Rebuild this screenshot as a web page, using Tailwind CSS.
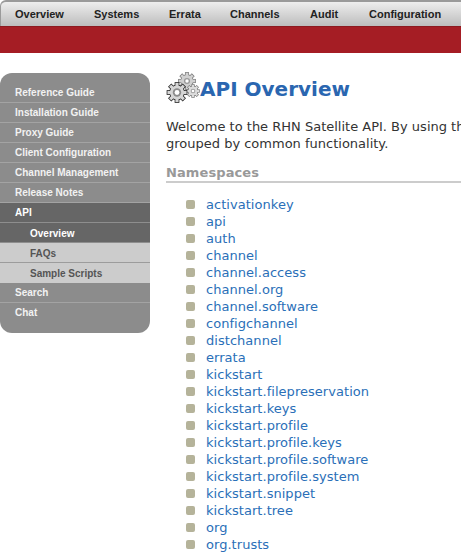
<!DOCTYPE html>
<html><head><meta charset="utf-8">
<script src="https://cdn.jsdelivr.net/npm/@tailwindcss/browser@4"></script>
</head>
<body class="bg-white overflow-hidden">
<div class="w-[461px] h-[558px] overflow-hidden flex flex-col">
  <nav class="h-[26px] shrink-0 flex items-center rounded-tl-[6px] border-t-2 border-l border-[#9a9a9a] border-b-0 bg-gradient-to-b from-[#eeeeee] to-[#bdbdbd] font-['Liberation_Sans',sans-serif] font-bold text-[11px] text-[#222] whitespace-nowrap">
    <a class="ml-[14px] w-[79px]">Overview</a>
    <a class="w-[75px]">Systems</a>
    <a class="w-[61px]">Errata</a>
    <a class="w-[80px]">Channels</a>
    <a class="w-[59px]">Audit</a>
    <a>Configuration</a>
  </nav>
  <div class="h-[27px] shrink-0 bg-[#a51d24] border-t border-[#8c1a20]"></div>
  <div class="flex flex-1 min-h-0 mt-[20px]">
    <aside class="w-[150px] h-[260px] shrink-0 rounded-[12px] bg-[#8c8c8c] pt-[10px] pb-[10px] font-['Liberation_Sans',sans-serif] font-bold text-[10px] text-[#f2f2f2]">
      <div class="h-[20px] pl-[15px] flex items-center border-b border-[#a3a3a3]">Reference Guide</div>
      <div class="h-[20px] pl-[15px] flex items-center border-b border-[#a3a3a3]">Installation Guide</div>
      <div class="h-[20px] pl-[15px] flex items-center border-b border-[#a3a3a3]">Proxy Guide</div>
      <div class="h-[20px] pl-[15px] flex items-center border-b border-[#a3a3a3]">Client Configuration</div>
      <div class="h-[20px] pl-[15px] flex items-center border-b border-[#a3a3a3]">Channel Management</div>
      <div class="h-[20px] pl-[15px] flex items-center border-b border-[#a3a3a3]">Release Notes</div>
      <div class="h-[20px] pl-[15px] flex items-center bg-[#666666] border-b border-[#8e8e8e] text-white">API</div>
      <div class="h-[20px] pl-[30px] pt-px flex items-center bg-[#666666] border-b border-[#8e8e8e] text-white">Overview</div>
      <div class="h-[20px] pl-[30px] pt-px flex items-center bg-[#cccccc] border-b border-[#9c9c9c] text-[#555]">FAQs</div>
      <div class="h-[20px] pl-[30px] flex items-center bg-[#cccccc] text-[#555]">Sample Scripts</div>
      <div class="h-[20px] pl-[15px] flex items-center border-b border-[#a3a3a3]">Search</div>
      <div class="h-[20px] pl-[15px] flex items-center border-b border-transparent">Chat</div>
    </aside>
    <main class="flex-1 min-w-0 pl-[16px] font-['DejaVu_Sans',sans-serif] text-[13px] leading-[17px] text-[#333]">
      <h1 class="h-[32px] flex items-center -mt-[1px] font-bold text-[20px] text-[#2a66b0] whitespace-nowrap">
        <svg width="34" height="32" viewBox="0 0 34 32" class="shrink-0">
          <defs>
            <g id="gear">
              <circle r="7"/>
              <rect x="-1.6" y="-9.6" width="3.2" height="4"/>
              <rect x="-1.6" y="-9.6" width="3.2" height="4" transform="rotate(45)"/>
              <rect x="-1.6" y="-9.6" width="3.2" height="4" transform="rotate(90)"/>
              <rect x="-1.6" y="-9.6" width="3.2" height="4" transform="rotate(135)"/>
              <rect x="-1.6" y="-9.6" width="3.2" height="4" transform="rotate(180)"/>
              <rect x="-1.6" y="-9.6" width="3.2" height="4" transform="rotate(225)"/>
              <rect x="-1.6" y="-9.6" width="3.2" height="4" transform="rotate(270)"/>
              <rect x="-1.6" y="-9.6" width="3.2" height="4" transform="rotate(315)"/>
            </g>
          </defs>
          <g transform="translate(21 9) scale(.85)">
            <use href="#gear" fill="#777" stroke="#777" stroke-width="1.6"/>
            <use href="#gear" fill="#d0d0d0"/>
            <circle r="3.6" fill="#9a9a9a"/><circle r="2" fill="#fff"/>
          </g>
          <g transform="translate(27 19) scale(.65)">
            <use href="#gear" fill="#777" stroke="#777" stroke-width="1.8"/>
            <use href="#gear" fill="#dcdcdc"/>
            <circle r="3.6" fill="#a0a0a0"/><circle r="2" fill="#fff"/>
          </g>
          <g transform="translate(11 20.5)">
            <use href="#gear" fill="#222" stroke="#222" stroke-width="1.5"/>
            <use href="#gear" fill="#d6d6d6"/>
            <circle r="4.2" fill="#8c8c8c"/><circle r="2.4" fill="#fff"/>
          </g>
        </svg>
        <span class="pt-[2px]">API Overview</span>
      </h1>
      <p class="mt-[14px] w-[700px]">Welcome to the RHN Satellite API. By using this API, you can<br>grouped by common functionality.</p>
      <h2 class="mt-[12px] h-[19px] border-b-2 border-[#cccccc] w-[295px] font-bold text-[#999999] leading-[17px] tracking-[0.1px]">Namespaces</h2>
      <ul class="mt-[13px] pl-[20px] text-[#2a6fb8] tracking-[0.04px]">
        <li class="flex items-center gap-[11px] h-[17px]"><i class="size-[9px] rounded-[2px] bg-[#b5b39a]"></i>activationkey</li>
        <li class="flex items-center gap-[11px] h-[17px]"><i class="size-[9px] rounded-[2px] bg-[#b5b39a]"></i>api</li>
        <li class="flex items-center gap-[11px] h-[17px]"><i class="size-[9px] rounded-[2px] bg-[#b5b39a]"></i>auth</li>
        <li class="flex items-center gap-[11px] h-[17px]"><i class="size-[9px] rounded-[2px] bg-[#b5b39a]"></i>channel</li>
        <li class="flex items-center gap-[11px] h-[17px]"><i class="size-[9px] rounded-[2px] bg-[#b5b39a]"></i>channel.access</li>
        <li class="flex items-center gap-[11px] h-[17px]"><i class="size-[9px] rounded-[2px] bg-[#b5b39a]"></i>channel.org</li>
        <li class="flex items-center gap-[11px] h-[17px]"><i class="size-[9px] rounded-[2px] bg-[#b5b39a]"></i>channel.software</li>
        <li class="flex items-center gap-[11px] h-[17px]"><i class="size-[9px] rounded-[2px] bg-[#b5b39a]"></i>configchannel</li>
        <li class="flex items-center gap-[11px] h-[17px]"><i class="size-[9px] rounded-[2px] bg-[#b5b39a]"></i>distchannel</li>
        <li class="flex items-center gap-[11px] h-[17px]"><i class="size-[9px] rounded-[2px] bg-[#b5b39a]"></i>errata</li>
        <li class="flex items-center gap-[11px] h-[17px]"><i class="size-[9px] rounded-[2px] bg-[#b5b39a]"></i>kickstart</li>
        <li class="flex items-center gap-[11px] h-[17px]"><i class="size-[9px] rounded-[2px] bg-[#b5b39a]"></i>kickstart.filepreservation</li>
        <li class="flex items-center gap-[11px] h-[17px]"><i class="size-[9px] rounded-[2px] bg-[#b5b39a]"></i>kickstart.keys</li>
        <li class="flex items-center gap-[11px] h-[17px]"><i class="size-[9px] rounded-[2px] bg-[#b5b39a]"></i>kickstart.profile</li>
        <li class="flex items-center gap-[11px] h-[17px]"><i class="size-[9px] rounded-[2px] bg-[#b5b39a]"></i>kickstart.profile.keys</li>
        <li class="flex items-center gap-[11px] h-[17px]"><i class="size-[9px] rounded-[2px] bg-[#b5b39a]"></i>kickstart.profile.software</li>
        <li class="flex items-center gap-[11px] h-[17px]"><i class="size-[9px] rounded-[2px] bg-[#b5b39a]"></i>kickstart.profile.system</li>
        <li class="flex items-center gap-[11px] h-[17px]"><i class="size-[9px] rounded-[2px] bg-[#b5b39a]"></i>kickstart.snippet</li>
        <li class="flex items-center gap-[11px] h-[17px]"><i class="size-[9px] rounded-[2px] bg-[#b5b39a]"></i>kickstart.tree</li>
        <li class="flex items-center gap-[11px] h-[17px]"><i class="size-[9px] rounded-[2px] bg-[#b5b39a]"></i>org</li>
        <li class="flex items-center gap-[11px] h-[17px]"><i class="size-[9px] rounded-[2px] bg-[#b5b39a]"></i>org.trusts</li>
      </ul>
    </main>
  </div>
</div>
</body></html>
